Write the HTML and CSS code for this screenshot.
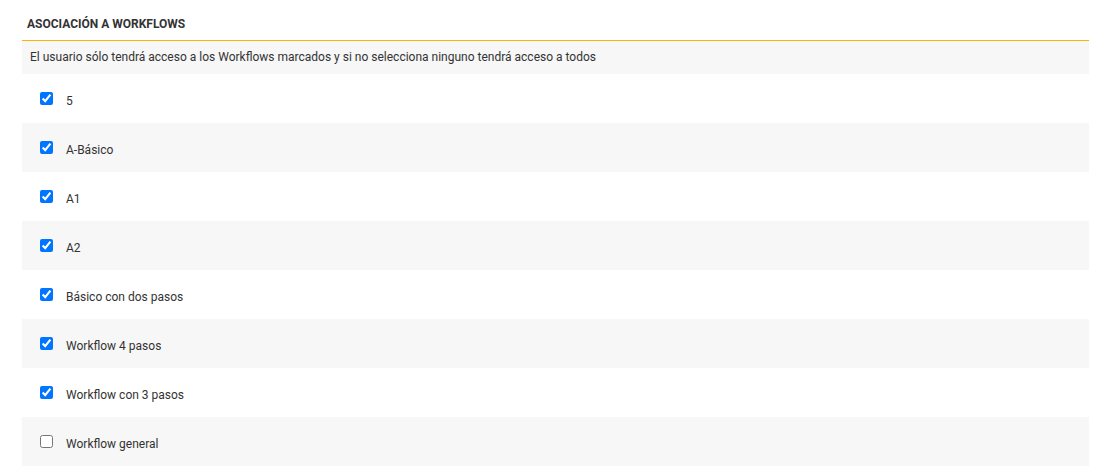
FILE: index.html
```html
<!DOCTYPE html>
<html lang="es">
<head>
<meta charset="utf-8">
<link rel="stylesheet" href="styles.css">
</head>
<body>
<section class="panel">
  <h2 class="panel-title">ASOCIACIÓN A WORKFLOWS</h2>
  <p class="panel-desc">El usuario sólo tendrá acceso a los Workflows marcados y si no selecciona ninguno tendrá acceso a todos</p>
  <ul class="wf-list">
    <li class="wf-row"><input type="checkbox" checked><span>5</span></li>
    <li class="wf-row"><input type="checkbox" checked><span>A-Básico</span></li>
    <li class="wf-row"><input type="checkbox" checked><span>A1</span></li>
    <li class="wf-row"><input type="checkbox" checked><span>A2</span></li>
    <li class="wf-row"><input type="checkbox" checked><span>Básico con dos pasos</span></li>
    <li class="wf-row"><input type="checkbox" checked><span>Workflow 4 pasos</span></li>
    <li class="wf-row"><input type="checkbox" checked><span>Workflow con 3 pasos</span></li>
    <li class="wf-row"><input type="checkbox"><span>Workflow general</span></li>
  </ul>
</section>
</body>
</html>
```
FILE: styles.css
```css
* { box-sizing: border-box; }
html, body { margin: 0; padding: 0; background: #fff; }
body {
  font-family: Roboto, "Liberation Sans", Arial, sans-serif;
  font-size: 12px;
  color: #333;
}
.panel {
  margin-left: 22px;
  width: 1067px;
}
.panel-title {
  margin: 0;
  padding: 17px 5px 9px;
  font-size: 12px;
  line-height: 14px;
  font-weight: 700;
  color: #333;
  border-bottom: 1px solid #ffb300;
}
.panel-desc {
  margin: 0;
  height: 33px;
  line-height: 33px;
  padding-left: 8px;
  background: #f7f7f7;
  color: #333;
}
.wf-list {
  list-style: none;
  margin: 0;
  padding: 0;
}
.wf-row {
  display: flex;
  align-items: center;
  gap: 13px;
  height: 49px;
  padding-left: 18px;
}
.wf-row:nth-child(even) { background: #f7f7f7; }
.wf-row input {
  margin: 0;
  width: 13px;
  height: 13px;
}
.wf-row span {
  line-height: 14px;
  padding-top: 5px;
}
```
